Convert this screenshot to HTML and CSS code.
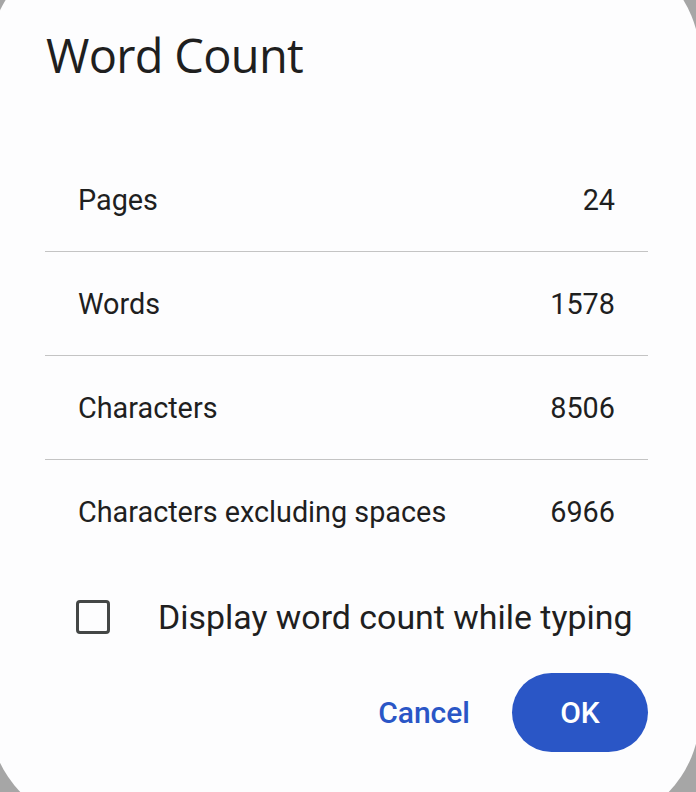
FILE: index.html
```html
<!DOCTYPE html>
<html lang="en">
<head>
  <meta charset="UTF-8" />
  <meta name="viewport" content="width=device-width, initial-scale=1.0"/>
  <title>Word Count</title>
  <link rel="stylesheet" href="styles.css">
</head>
<body>
  <div class="dialog">
    <h1 class="dialog-title">Word Count</h1>

    <div class="stats">
      <div class="stat-row">
        <span class="stat-label">Pages</span>
        <span class="stat-value">24</span>
      </div>
      <div class="stat-row">
        <span class="stat-label">Words</span>
        <span class="stat-value">1578</span>
      </div>
      <div class="stat-row">
        <span class="stat-label">Characters</span>
        <span class="stat-value">8506</span>
      </div>
      <div class="stat-row">
        <span class="stat-label">Characters excluding spaces</span>
        <span class="stat-value">6966</span>
      </div>
    </div>

    <label class="check-row">
      <span class="checkbox"></span>
      <span class="check-label">Display word count while typing</span>
    </label>

    <div class="actions">
      <button class="btn-text">Cancel</button>
      <button class="btn-filled">OK</button>
    </div>
  </div>
</body>
</html>
```

FILE: styles.css
```css
:root {
  --backdrop: #a6a6a6;
  --surface: #fdfdfe;
  --text-color: #1f1f1f;
  --divider: #c4c4c4;
  --primary-color: #2a56c6;
}

* {
  margin: 0;
  padding: 0;
  box-sizing: border-box;
}

body {
  background-color: var(--backdrop);
  color: var(--text-color);
  font-family: Roboto, 'Liberation Sans', sans-serif;
  height: 100vh;
  overflow: hidden;
}

.dialog {
  width: 711px;
  height: 881px;
  margin: -54px 0 0 -11px;
  padding: 77px 52px 0 56px;
  background: var(--surface);
  border-radius: 113px;
}

.dialog-title {
  font-family: 'Open Sans', sans-serif;
  font-weight: 400;
  font-size: 47px;
  line-height: 64px;
  margin-left: 1px;
  letter-spacing: -0.7px;
}

.stats {
  margin-top: 61px;
}

.stat-row {
  display: flex;
  justify-content: space-between;
  align-items: center;
  height: 104px;
  padding: 0 33px;
  font-size: 28.8px;
  border-bottom: 1px solid var(--divider);
}

.stat-row:last-child {
  border-bottom: none;
}

.check-row {
  display: flex;
  align-items: center;
  height: 56px;
  margin-top: 25px;
  padding-left: 31px;
}

.checkbox {
  width: 34px;
  height: 34px;
  border: 3px solid #444746;
  border-radius: 4px;
}

.check-label {
  margin-left: 48px;
  font-size: 33.9px;
}

.actions {
  display: flex;
  justify-content: flex-end;
  align-items: center;
  gap: 42px;
  margin-top: 28px;
}

button {
  font-family: Roboto, sans-serif;
  font-weight: 500;
  font-size: 30px;
  border: none;
  cursor: pointer;
}

.btn-text {
  background: none;
  color: var(--primary-color);
}

.btn-filled {
  width: 136px;
  height: 79px;
  border-radius: 40px;
  background-color: var(--primary-color);
  color: #ffffff;
}
```
